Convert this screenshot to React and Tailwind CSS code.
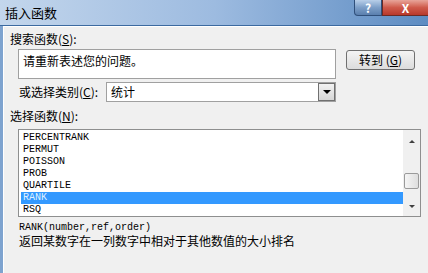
import React from 'react';

const cjk = { fontFamily: '"Noto Sans CJK SC", "Liberation Sans", sans-serif' };
const mono = { fontFamily: '"Liberation Mono", "DejaVu Sans Mono", monospace' };

export default function App() {
  const functions = ['PERCENTRANK', 'PERMUT', 'POISSON', 'PROB', 'QUARTILE', 'RANK', 'RSQ'];
  const selected = 'RANK';

  return (
    <div className="w-[428px] h-[273px] overflow-hidden flex flex-col bg-[#7ea3cf]" style={cjk}>
      {/* Title bar */}
      <div className="h-[26px] shrink-0 flex items-start justify-between bg-gradient-to-r from-[#c3d6ec] via-[#9dbbe0] to-[#5d8cc2] border-b border-[#3c6aa0]">
        <div className="pl-[5px] pt-[4px] text-[13px] leading-[18px] text-black">插入函数</div>
        <div className="flex">
          <div className="w-[28px] h-[16px] rounded-bl-[4px] border border-t-0 border-[#2f4f7a] bg-gradient-to-b from-[#b8cfe9] via-[#7d9fc8] to-[#5a7fae] flex items-center justify-center text-white text-[12px] font-bold leading-none">?</div>
          <div className="w-[46px] h-[16px] border border-t-0 border-r-0 border-[#6b2a24] bg-gradient-to-b from-[#e7a49a] via-[#cf5a4b] to-[#b8382b] flex items-center justify-center text-white text-[12px] font-bold leading-none">X</div>
        </div>
      </div>

      {/* Body */}
      <div className="flex-1 flex pl-[3px]">
        <div className="flex-1 border-l border-t border-white bg-[#f0f0f0] pl-[6px] pt-[5px]">
          <div className="text-[12px] leading-[14px] text-black">
            搜索函数(<span className="underline">S</span>):
          </div>

          <div className="flex items-start mt-[3px] ml-[8px]">
            <div className="w-[318px] h-[30px] border border-[#a0a0a0] bg-white px-[4px] pt-[3px] text-[12px] leading-[16px] text-black">
              请重新表述您的问题。
            </div>
            <div className="ml-[10px] mt-[1px] w-[69px] h-[20px] rounded-[3px] border border-[#707070] bg-gradient-to-b from-[#f4f4f4] to-[#dcdcdc] flex items-center justify-center text-[12px] text-black leading-none">
              转到 (<span className="underline">G</span>)
            </div>
          </div>

          <div className="flex items-center mt-[3px] ml-[9px]">
            <div className="w-[87px] text-[12px] leading-[14px] text-black">
              或选择类别(<span className="underline">C</span>):
            </div>
            <div className="w-[230px] h-[20px] border border-[#a0a0a0] bg-white flex items-center justify-between">
              <span className="pl-[4px] text-[12px] leading-none text-black">统计</span>
              <div className="w-[17px] h-[18px] border border-[#707070] bg-gradient-to-b from-[#f2f2f2] to-[#d6d6d6] flex items-center justify-center">
                <div className="w-0 h-0 border-l-[4px] border-r-[4px] border-t-[4px] border-l-transparent border-r-transparent border-t-black" />
              </div>
            </div>
          </div>

          <div className="mt-[7px] text-[12px] leading-[14px] text-black">
            选择函数(<span className="underline">N</span>):
          </div>

          {/* Function list */}
          <div className="mt-[6px] ml-[8px] w-[403px] h-[88px] border border-[#8e8f8f] bg-white flex">
            <div className="flex-1 pt-[2px] pl-[2px]">
              {functions.map((name) => (
                <div
                  key={name}
                  className={`h-[12px] pl-[2px] text-[10px] leading-[12px] ${
                    name === selected ? 'bg-[#3399ff] text-[#dff0ff]' : 'text-black'
                  }`}
                  style={mono}
                >
                  {name}
                </div>
              ))}
            </div>
            <div className="w-[17px] bg-[#f0f0f0] flex flex-col items-center">
              <div className="h-[22px] flex items-center justify-center">
                <div className="w-0 h-0 border-l-[3px] border-r-[3px] border-b-[3px] border-l-transparent border-r-transparent border-b-[#404040]" />
              </div>
              <div className="mt-[21px] w-[15px] h-[16px] rounded-[2px] border border-[#9a9a9a] bg-gradient-to-r from-[#f5f5f5] to-[#dedede]" />
              <div className="flex-1" />
              <div className="h-[20px] flex items-center justify-center">
                <div className="w-0 h-0 border-l-[3px] border-r-[3px] border-t-[3px] border-l-transparent border-r-transparent border-t-[#404040]" />
              </div>
            </div>
          </div>

          <div className="mt-[5px] ml-[9px] text-[10px] leading-[12px] text-black" style={mono}>
            RANK(number,ref,order)
          </div>
          <div className="ml-[9px] text-[12px] leading-[14px] text-black">
            返回某数字在一列数字中相对于其他数值的大小排名
          </div>
        </div>
      </div>
    </div>
  );
}
